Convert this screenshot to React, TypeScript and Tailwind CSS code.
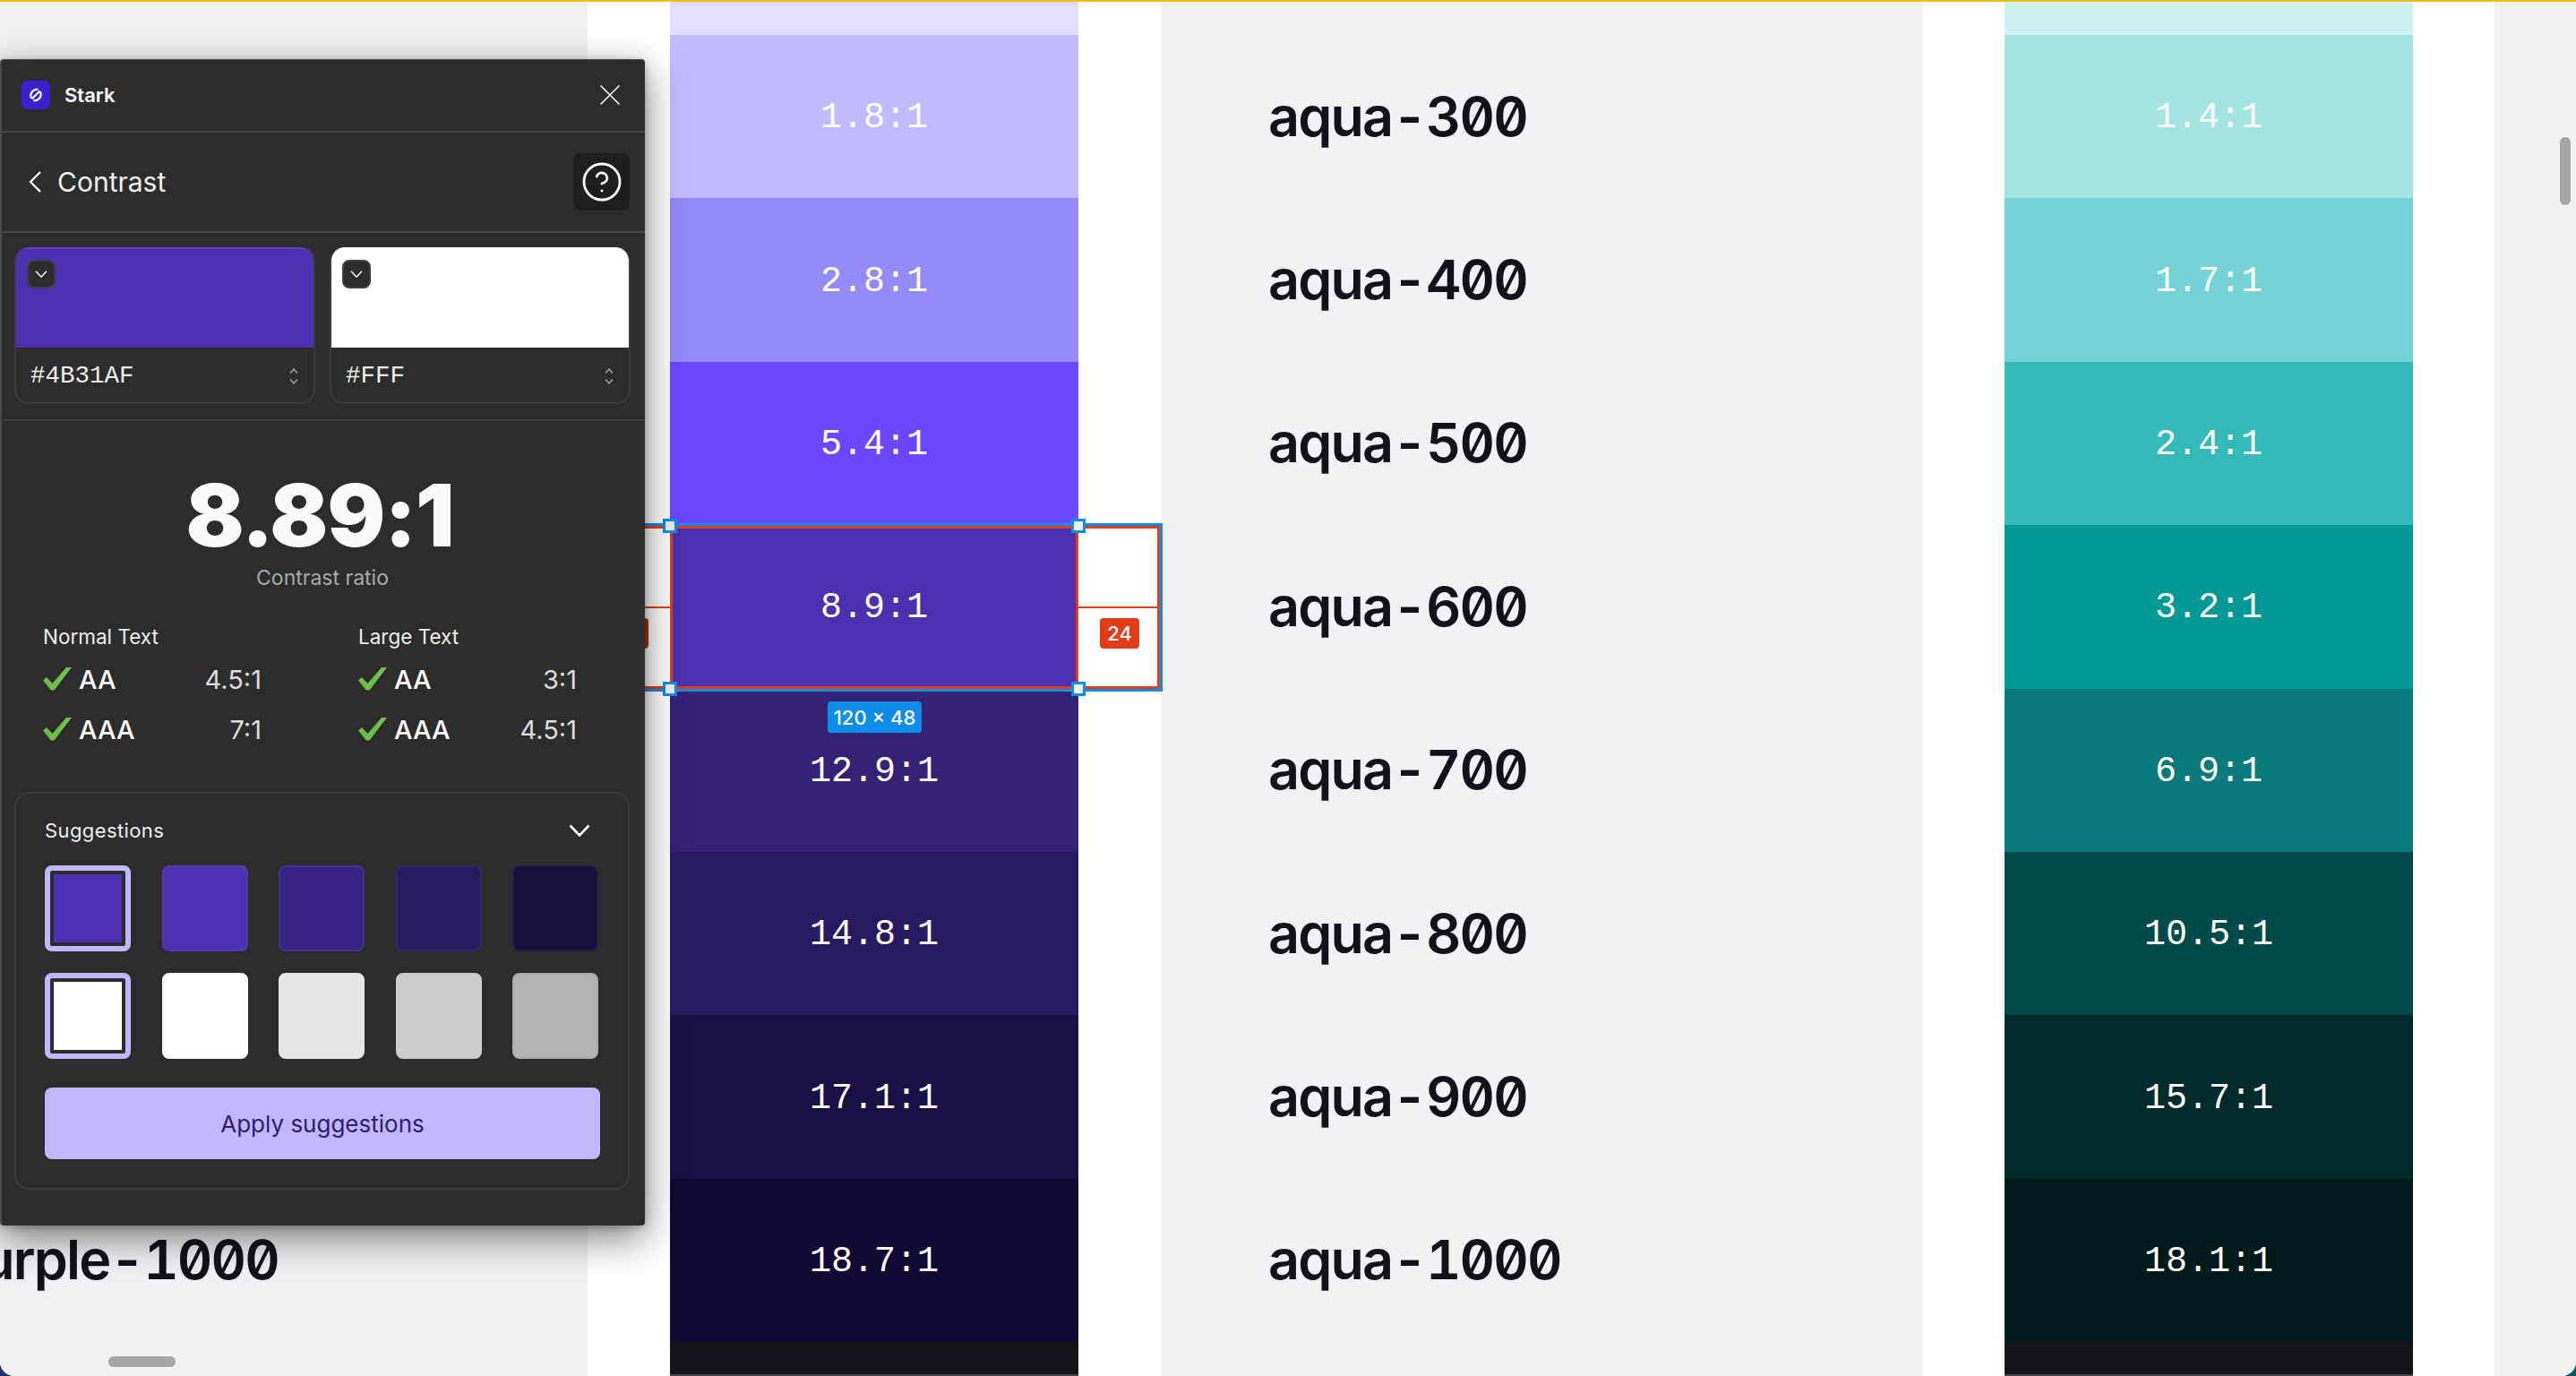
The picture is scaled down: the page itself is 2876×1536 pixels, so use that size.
import { CircleHelp } from "lucide-react";

const purpleRows = [
  { bg: "bg-[#c2baff]", ratio: "1.8:1", label: "" },
  { bg: "bg-[#948af8]", ratio: "2.8:1", label: "" },
  { bg: "bg-[#6b47ff]", ratio: "5.4:1", label: "" },
  { bg: "bg-[#4b31af]", ratio: "8.9:1", label: "" },
  { bg: "bg-[#342275]", ratio: "12.9:1", label: "" },
  { bg: "bg-[#281a60]", ratio: "14.8:1", label: "" },
  { bg: "bg-[#1b1046]", ratio: "17.1:1", label: "" },
  { bg: "bg-[#120a33]", ratio: "18.7:1", label: "purple-1000" },
];

const aquaRows = [
  { bg: "bg-[#a2e5e3]", ratio: "1.4:1", label: "aqua-300" },
  { bg: "bg-[#74d4d5]", ratio: "1.7:1", label: "aqua-400" },
  { bg: "bg-[#34bab9]", ratio: "2.4:1", label: "aqua-500" },
  { bg: "bg-[#029895]", ratio: "3.2:1", label: "aqua-600" },
  { bg: "bg-[#077a79]", ratio: "6.9:1", label: "aqua-700" },
  { bg: "bg-[#004a49]", ratio: "10.5:1", label: "aqua-800" },
  { bg: "bg-[#002b2a]", ratio: "15.7:1", label: "aqua-900" },
  { bg: "bg-[#001a19]", ratio: "18.1:1", label: "aqua-1000" },
];

type Row = { bg: string; ratio: string; label: string };

const LabelColumn = ({ rows, className, inset }: { rows: Row[]; className: string; inset: string }) => (
  <div className={`w-[851px] shrink-0 bg-[#f0f2f4] pt-[37px] ${className}`}>
    {rows.map((r) => (
      <div
        key={r.ratio}
        className={`flex h-[182.4px] items-center font-['Inter',sans-serif] text-[61px] font-semibold leading-none tracking-[-1.8px] text-[#111318] tabular-nums slashed-zero ${inset}`}
      >
        {r.label}
      </div>
    ))}
  </div>
);

const SwatchColumn = ({ rows, top, className }: { rows: Row[]; top: string; className: string }) => (
  <div className={`flex w-[456px] shrink-0 flex-col ${className}`}>
    <div className={`h-[37px] ${top}`} />
    {rows.map((r) => (
      <div
        key={r.ratio}
        className={`flex h-[182.4px] items-center justify-center pt-[4px] font-['Liberation_Mono',monospace] text-[40px] leading-none text-white ${r.bg}`}
      >
        {r.ratio}
      </div>
    ))}
    <div className="flex-1 border-b-2 border-[#45454a] bg-[#13151a]" />
  </div>
);

const Chevron = ({ className }: { className: string }) => (
  <svg viewBox="0 0 24 14" className={className} fill="none" stroke="currentColor" strokeWidth="2.6">
    <path d="M1.5 1.5 12 12.5 22.500 1.5" />
  </svg>
);

const SwatchCard = ({ color, border, value }: { color: string; border: string; value: string }) => (
  <div className="flex h-[175px] w-[336px] flex-col overflow-hidden rounded-[16px] border-2 border-t-0 border-[#3b3b3b]">
    <div className={`relative -mx-[2px] h-[112px] rounded-t-[16px] border-2 border-b-0 p-[12px] ${color} ${border}`}>
      <div className="flex h-[32px] w-[32px] items-center justify-center rounded-[8px] border-2 border-[#3f3f3f] bg-[#2c2c2c] text-white">
        <Chevron className="h-[8px] w-[14px]" />
      </div>
    </div>
    <div className="flex flex-1 items-center justify-between pl-[16px] pr-[17px] pt-[3px] font-['Liberation_Mono',monospace] text-[27.5px] leading-none text-[#eeeeee]">
      {value}
      <svg viewBox="0 0 10 18" className="h-[18px] w-[10px]" fill="none" stroke="#a5a5a5" strokeWidth="1.400">
        <path d="M1 5.500 5 1l4 4.500M1 12.500 5 17l4-4.500" />
      </svg>
    </div>
  </div>
);

const Check = () => (
  <svg viewBox="0 0 32 26" className="h-[26px] w-[32px] shrink-0" fill="#6cc04a">
    <path d="M0 14.500 4 11l6.500 7L26 0h6L12.500 25.500h-3.500z" />
  </svg>
);

const Level = ({ name, value }: { name: string; value: string }) => (
  <div className="flex h-[56px] items-center">
    <Check />
    <span className="ml-[8px] flex-1 text-[29px] font-medium leading-none text-white">{name}</span>
    <span className="text-[29px] leading-none text-[#dddddd]">{value}</span>
  </div>
);

const Swatch = ({ color, selected }: { color: string; selected?: boolean }) =>
  selected ? (
    <div className="h-[96px] rounded-[8px] border-[6px] border-[#c2b6ff] p-[4px]">
      <div className={`h-full w-full ${color}`} />
    </div>
  ) : (
    <div className={`h-[96px] rounded-[8px] border-2 ${color}`} />
  );

const Panel = () => (
  <div className="absolute left-0 top-[66px] z-20 flex h-[1302px] w-[720px] flex-col rounded-[4px] border-l-2 border-t border-[#4a4a4a] bg-[#2c2c2c] font-['Inter',sans-serif] shadow-[0_14px_44px_rgba(0,0,0,0.5),0_2px_8px_rgba(0,0,0,0.25)]">
    {/* HEADER */}
    <div className="flex h-[81px] shrink-0 items-center border-b-2 border-[#444444] pb-[2px] pl-[22px] pr-[28px]">
      <div className="flex h-[32px] w-[32px] items-center justify-center rounded-[7px] bg-[#3a1fd1]">
        <svg viewBox="0 0 16 16" className="h-[16px] w-[16px]" fill="none" stroke="white" strokeWidth="2.200">
          <path d="M3 11.500A6.800 6.800 0 0 1 10.500 2M13 4.500A6.800 6.800 0 0 1 5.500 14M3.500 12.500 12.500 3.500" />
        </svg>
      </div>
      <span className="ml-[16px] flex-1 text-[22px] font-semibold leading-none text-white">Stark</span>
      <svg viewBox="0 0 22 22" className="h-[22px] w-[22px]" stroke="white" strokeWidth="1.500">
        <path d="M0.500 0.500 21.500 21.500M21.500 0.500 0.500 21.500" />
      </svg>
    </div>

    {/* CONTRAST BAR */}
    <div className="flex h-[112px] shrink-0 items-center border-b-2 border-[#444444] pl-[30px] pr-[15px]">
      <svg viewBox="0 0 14 24" className="h-[24px] w-[14px]" fill="none" stroke="white" strokeWidth="2.200">
        <path d="M13 1 2 12l11 11" />
      </svg>
      <span className="ml-[18px] flex-1 text-[30px] leading-none text-[#f2f2f2]">Contrast</span>
      <div className="mr-[2px] flex h-[64px] w-[63px] items-center justify-center rounded-[8px] bg-[#1e1e1e] text-white">
        <CircleHelp size={48} strokeWidth={1.400} />
      </div>
    </div>

    {/* SWATCHES */}
    <div className="flex h-[210px] shrink-0 gap-[16px] border-b-2 border-[#3b3b3b] pl-[14px] pt-[16px]">
      <SwatchCard color="bg-[#4b31af]" border="border-[#5a3fc0]" value="#4B31AF" />
      <SwatchCard color="bg-white" border="border-white" value="#FFF" />
    </div>

    {/* RATIO */}
    <div className="flex flex-col items-center pr-[8px] pt-[61px]">
      <div className="text-[96px] font-black leading-[88px] tracking-[-1px] text-[#fafafa]">8.89:1</div>
      <div className="mt-[15px] pl-[6px] text-[23px] leading-none text-[#aaaaaa]">Contrast ratio</div>
    </div>

    {/* LEVELS */}
    <div className="mt-[41px] grid grid-cols-[244px_244px] gap-[108px] pl-[46px]">
      <div>
        <div className="mb-[6px] text-[22.5px] leading-[26px] text-[#eeeeee]">Normal Text</div>
        <Level name="AA" value="4.5:1" />
        <Level name="AAA" value="7:1" />
      </div>
      <div>
        <div className="mb-[6px] text-[22.5px] leading-[26px] text-[#eeeeee]">Large Text</div>
        <Level name="AA" value="3:1" />
        <Level name="AAA" value="4.5:1" />
      </div>
    </div>

    {/* SUGGESTIONS */}
    <div className="ml-[14px] mt-[42px] flex h-[444px] w-[687px] flex-col rounded-[16px] border-2 border-[#3b3b3b] px-[32px] pt-[28px]">
      <div className="flex h-[26px] items-center justify-between pr-[10px]">
        <span className="text-[22px] leading-none tracking-[0.4px] text-[#eeeeee]">Suggestions</span>
        <Chevron className="h-[14px] w-[24px] text-white" />
      </div>
      <div className="mt-[26px] grid w-[618px] grid-cols-5 gap-x-[34.5px] gap-y-[24px]">
        <Swatch color="bg-[#4b31af]" selected />
        <Swatch color="bg-[#4b31af] border-[#5238b8]" />
        <Swatch color="bg-[#372383] border-[#432e91]" />
        <Swatch color="bg-[#27195f] border-[#33246e]" />
        <Swatch color="bg-[#170f3c] border-[#221a4a]" />
        <Swatch color="bg-white" selected />
        <Swatch color="bg-white border-white" />
        <Swatch color="bg-[#e6e6e6] border-[#e6e6e6]" />
        <Swatch color="bg-[#cccccc] border-[#cccccc]" />
        <Swatch color="bg-[#b3b3b3] border-[#a8a8a8]" />
      </div>
      <button className="mt-[32px] h-[80px] w-[620px] rounded-[8px] bg-[#c2b6fd] text-[26px] text-[#2e1e6e]">
        Apply suggestions
      </button>
    </div>
  </div>
);

const Handle = ({ className }: { className: string }) => (
  <div className={`absolute h-[16px] w-[16px] border-[3px] border-[#0d8dea] bg-[#f0f0f0] ${className}`} />
);

// figma selection drawn over the canvas
const Selection = () => (
  <div className="absolute left-[680px] top-[584px] z-10 h-[188px] w-[618px] border-[3px] border-l-0 border-[#0d8dea]">
    <div className="absolute left-0 top-0 h-[3px] w-[615px] bg-[#e23d18]" />
    <div className="absolute bottom-0 left-0 h-[3px] w-[615px] bg-[#e23d18]" />
    <div className="absolute left-[68px] top-0 h-full w-[3px] bg-[#e23d18]" />
    <div className="absolute left-[521px] top-0 h-full w-[3px] bg-[#e23d18]" />
    <div className="absolute left-[612px] top-0 h-full w-[3px] bg-[#e23d18]" />
    <div className="absolute left-0 top-[90px] h-[2px] w-[68px] bg-[#e23d18]" />
    <div className="absolute left-[524px] top-[90px] h-[2px] w-[88px] bg-[#e23d18]" />
    <div className="absolute left-[24px] top-[103px] h-[34px] w-[20px] rounded-[4px] bg-[#b03012]" />
    <div className="absolute left-[548px] top-[103px] flex h-[34px] w-[44px] items-center justify-center rounded-[4px] bg-[#e23d18] font-['Inter',sans-serif] text-[22px] font-medium leading-none text-white">
      24
    </div>
    <Handle className="left-[60px] -top-[8px]" />
    <Handle className="left-[516px] -top-[8px]" />
    <Handle className="left-[60px] top-[174px]" />
    <Handle className="left-[516px] top-[174px]" />
    <div className="absolute left-[244px] top-[196px] flex h-[35px] w-[105px] items-center justify-center rounded-[4px] bg-[#0d8dea] font-['Inter',sans-serif] text-[22px] font-medium leading-none text-white">
      120 × 48
    </div>
  </div>
);

export default function App() {
  return (
    <div className="relative h-[1536px] w-[2876px] overflow-hidden bg-[linear-gradient(90deg,#1f2f7a,#1f2f7a_50%,#0d5560_50%,#0d5560)]">
      <div className="flex h-full overflow-hidden rounded-b-[16px] border-t-2 border-[#f0be1c] bg-white">
        <LabelColumn rows={purpleRows} className="-ml-[195px]" inset="pl-[138px]" />
        <SwatchColumn rows={purpleRows} top="bg-[#e2deff]" className="ml-[92px]" />
        <LabelColumn rows={aquaRows} className="ml-[92px]" inset="pl-[120px]" />
        <SwatchColumn rows={aquaRows} top="bg-[#d0f1f1]" className="ml-[91px]" />
        <div className="ml-[91px] flex-1 bg-[#f0f2f4]" />
      </div>

      {/* scrollbars */}
      <div className="absolute left-[2858px] top-[153px] h-[76px] w-[12px] rounded-full bg-[#a6a7a9]" />
      <div className="absolute left-[121px] top-[1514px] h-[12px] w-[75px] rounded-full bg-[#a6a7a9]" />

      <Selection />
      <Panel />
    </div>
  );
}
